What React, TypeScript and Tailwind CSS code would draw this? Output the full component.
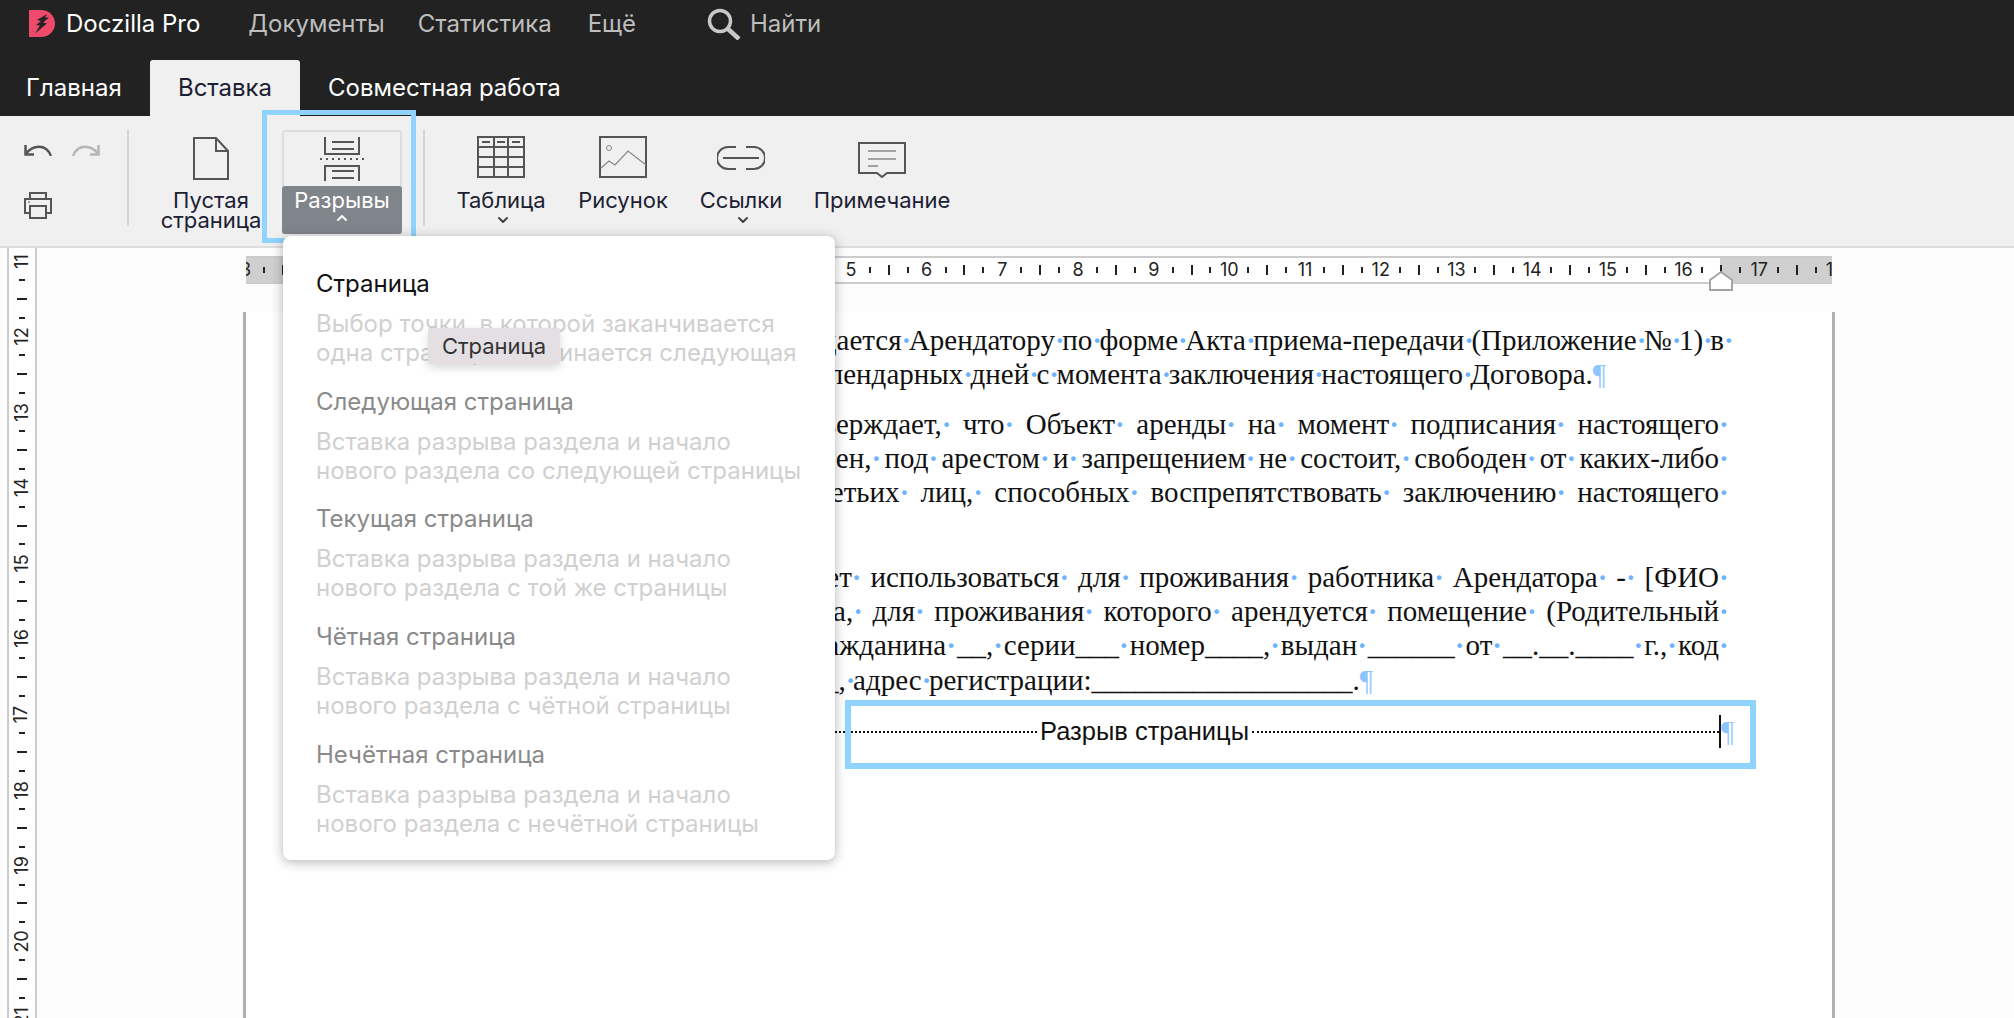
import { ChevronDown, ChevronUp } from "lucide-react";

const sans = "font-['Inter',sans-serif]";

function Logo() {
  return (
    <svg width="26" height="27" viewBox="0 0 26 27" className="shrink-0">
      <path d="M0 0h12c8 0 14 6 14 13.500s-6 13.500-14 13.500H0z" fill="#ee4a6c" />
      <path d="M18 4L8 10l4 1-5 4 4 .5-5 8 12-10-4-1 6-5-4 0z" fill="#222" />
    </svg>
  );
}

function SearchIcon() {
  return (
    <svg width="35" height="32" viewBox="0 0 35 32" fill="none" stroke="#c8c8c8" className="shrink-0">
      <circle cx="13" cy="13" r="10.500" strokeWidth="3.500" />
      <path d="M21 21l11 10" strokeWidth="4.500" />
    </svg>
  );
}

function TableIcon() {
  return (
    <svg width="48" height="42" viewBox="0 0 48 42" fill="none" stroke="#555" strokeWidth="2">
      <rect x="1" y="1" width="46" height="40" />
      <path d="M1 11h46M1 21h46M1 31h46M17 1v40M31 1v40" />
      <path d="M5 6h8M20 6h8M35 6h8" strokeWidth="2" />
    </svg>
  );
}

function PictureIcon() {
  return (
    <svg width="48" height="42" viewBox="0 0 48 42" fill="none" stroke="#555">
      <rect x="1" y="1" width="46" height="40" strokeWidth="2" />
      <circle cx="10" cy="12" r="2.500" stroke="#888" strokeWidth="1" />
      <path d="M2 32l8-7 6 4 13-14 18 14" stroke="#888" strokeWidth="1.200" />
    </svg>
  );
}

function LinkIcon() {
  return (
    <svg width="48" height="24" viewBox="0 0 48 24" fill="none" stroke="#555" strokeWidth="2">
      <path d="M19 1H11a10.500 10.500 0 0 0 0 22h8M29 1h8a10.500 10.500 0 0 1 0 22h-8M6 12h36" />
    </svg>
  );
}

function NoteIcon() {
  return (
    <svg width="48" height="36" viewBox="0 0 48 36" fill="none" stroke="#555">
      <path d="M1 1h46v30H29l-5 4-5-4H1z" strokeWidth="2" />
      <path d="M10 9h28M10 17h28M10 24h10" strokeWidth="1" />
    </svg>
  );
}

function BreaksIcon() {
  return (
    <svg width="44" height="44" viewBox="0 0 44 44" fill="none" stroke="#555" strokeWidth="2">
      <path d="M5 0v17h34V0M12 5h22M12 12h22" />
      <path d="M0 22h44" strokeDasharray="2 4" />
      <path d="M5 44V29h34v15M12 34h22M12 41h22" />
    </svg>
  );
}

function PageIcon() {
  return (
    <svg width="36" height="44" viewBox="0 0 36 44" fill="none" stroke="#555" strokeWidth="2">
      <path d="M1 1h22l12 13v28H1zM23 1v13h12" />
    </svg>
  );
}

function UndoIcon(props: { color: string; flip?: boolean }) {
  return (
    <svg width="28" height="11" viewBox="0 0 28 11" fill="none" stroke={props.color} strokeWidth="2.500" className={props.flip ? "-scale-x-100" : ""}>
      <path d="M1.500 0v9.500H10M2 9c6-9 20-11 25 2" />
    </svg>
  );
}

function PrintIcon() {
  return (
    <svg width="28" height="27" viewBox="0 0 28 27" fill="none" stroke="#555" strokeWidth="2">
      <path d="M6 6V1h16v5M6 21H1V7h26v14h-5" />
      <rect x="6" y="14" width="16" height="12" />
      <path d="M4 10h2" strokeWidth="1.500" stroke="#888" />
    </svg>
  );
}

function ToolButton(props: { icon: React.ReactNode; label: string; width: string; chevron?: boolean; iconClass?: string }) {
  return (
    <div className={`${props.width} flex flex-col items-center shrink-0`}>
      <div className="h-[53px] mt-[20px] flex items-center justify-center pb-[11px]">
        <div className={props.iconClass ?? ""}>{props.icon}</div>
      </div>
      <p className="text-[22px] leading-[22px] text-[#1c2033]">{props.label}</p>
      {props.chevron && <ChevronDown size={16} strokeWidth={3} className="text-[#444] mt-[1px] ml-[3px]" />}
    </div>
  );
}

function Toolbar() {
  return (
    <div className="h-[132px] bg-[#f0f0f0] border-b-2 border-[#dddddd] flex items-start shrink-0">
      <div className="ml-[24px] w-[76px] flex flex-col shrink-0">
        <div className="flex gap-[20px] mt-[29px]">
          <UndoIcon color="#555" />
          <UndoIcon color="#b5b5b5" flip />
        </div>
        <div className="mt-[36px]">
          <PrintIcon />
        </div>
      </div>
      <div className="w-[2px] h-[96px] bg-[#d4d4d4] mt-[14px] ml-[27px] shrink-0" />
      <div className="ml-[30px] w-[104px] flex flex-col items-center shrink-0">
        <div className="h-[53px] mt-[21px]">
          <PageIcon />
        </div>
        <p className="text-[22px] leading-[20px] text-[#1c2033] text-center">
          Пустая
          <br />
          страница
        </p>
      </div>
      <div className="relative ml-[19px] mt-[14px] w-[120px] h-[104px] rounded-[3px] border-2 border-[#dddddd] shrink-0">
        <div className="flex justify-center mt-[5px] h-[49px]">
          <BreaksIcon />
        </div>
        <div className="absolute inset-x-[-2px] bottom-[-2px] h-[48px] bg-[#80858b] rounded-[3px] flex flex-col items-center text-white">
          <p className="text-[22px] leading-[22px] mt-[3px]">Разрывы</p>
          <ChevronUp size={16} strokeWidth={3} className="-mt-[1px]" />
        </div>
        <div className="absolute left-[-22px] right-[-16px] top-[-22px] bottom-[-11px] border-[5px] border-[#8fd3fe]" />
      </div>
      <div className="w-[2px] h-[96px] bg-[#d4d4d4] mt-[14px] ml-[21px] shrink-0" />
      <div className="ml-[26px]">
        <ToolButton icon={<TableIcon />} label="Таблица" width="w-[100px]" chevron />
      </div>
      <div className="ml-[22px]">
        <ToolButton icon={<PictureIcon />} label="Рисунок" width="w-[100px]" />
      </div>
      <div className="ml-[18px]">
        <ToolButton icon={<LinkIcon />} label="Ссылки" width="w-[100px]" chevron iconClass="mt-[2px]" />
      </div>
      <div className="ml-[16px]">
        <ToolButton icon={<NoteIcon />} label="Примечание" width="w-[150px]" iconClass="mt-[6px]" />
      </div>
    </div>
  );
}

// numbers of the top ruler: left margin counts down, then the page counts up
const topNumbers = ["3", "2", "1", "", "1", "2", "3", "4", "5", "6", "7", "8", "9", "10", "11", "12", "13", "14", "15", "16", "17", "18"];
const sideNumbers = ["11", "12", "13", "14", "15", "16", "17", "18", "19", "20", "21"];

function TopRuler() {
  return (
    <div className="h-[28px] w-[1586px] overflow-hidden border-y-2 border-[#cccccc] bg-[linear-gradient(to_right,#cfcfcf_225px,#ffffff_225px,#ffffff_1474px,#cfcfcf_1474px)]">
      <div className="flex h-full -ml-[10px] items-center">
        {topNumbers.map((num, i) => (
          <div key={i} className="flex w-[75.7px] shrink-0 items-center">
            <div className="w-[18.925px] flex justify-center text-[18px] leading-none text-[#222] whitespace-nowrap">
              {num === "" ? <div className="w-[2px] h-[10px] bg-[#222]" /> : num}
            </div>
            <div className="w-[18.925px] flex justify-center">
              <div className="w-[2px] h-[6px] bg-[#222]" />
            </div>
            <div className="w-[18.925px] flex justify-center">
              <div className="w-[2px] h-[10px] bg-[#222]" />
            </div>
            <div className="w-[18.925px] flex justify-center">
              <div className="w-[2px] h-[6px] bg-[#222]" />
            </div>
          </div>
        ))}
      </div>
    </div>
  );
}

function SideRuler() {
  return (
    <div className="w-[30px] h-full overflow-hidden border-x-2 border-[#cccccc] bg-white shrink-0">
      <div className="flex flex-col mt-[3.500px] items-center">
        {sideNumbers.map((num) => (
          <div key={num} className="flex flex-col h-[75.6px] shrink-0 items-center">
            <div className="h-[18.9px] flex items-center justify-center text-[18px] leading-none text-[#222] -rotate-90 whitespace-nowrap">
              {num}
            </div>
            <div className="h-[18.9px] flex items-center">
              <div className="h-[2px] w-[6px] bg-[#222]" />
            </div>
            <div className="h-[18.9px] flex items-center">
              <div className="h-[2px] w-[10px] bg-[#222]" />
            </div>
            <div className="h-[18.9px] flex items-center">
              <div className="h-[2px] w-[6px] bg-[#222]" />
            </div>
          </div>
        ))}
      </div>
    </div>
  );
}

// one justified line, with the blue space marks of the editor
function Line(props: { text: string; last?: boolean; pr?: string }) {
  const words = props.text.split(" ");
  return (
    <div className={`h-[34.3px] leading-[34.3px] whitespace-nowrap ${props.pr ?? ""} ${props.last ? "text-right" : "[text-align-last:justify]"}`}>
      {words.map((word, i) => (
        <span key={i}>
          {word}
          {i < words.length - 1 || !props.last ? <span className="inline-block w-0 text-[#6cb4ff] font-bold">·</span> : null}
          {i < words.length - 1 ? " " : ""}
        </span>
      ))}
      {props.last && <span className="text-[#8ec5ff]">¶</span>}
    </div>
  );
}

function Page() {
  return (
    <div className="flex-1 bg-white border-x-[3px] border-[#b0b0b0] w-[1592px] -ml-[3px] pl-[225px] pr-[113px] pt-[11px] font-['Liberation_Serif',serif] text-[29px] text-[#111]">
      <Line text="Пп. 1.1. Объект аренды передается Арендатору по форме Акта приема-передачи (Приложение № 1) в" />
      <Line text="течение 3 (трёх) календарных дней с момента заключения настоящего Договора." last pr="pr-[113px]" />
      <div className="mt-[15px]">
        <Line text="4.2.10. Арендодатель подтверждает, что Объект аренды на момент подписания настоящего" />
        <Line text="такого Договора не обременен, под арестом и запрещением не состоит, свободен от каких-либо" />
        <Line text="не имеется притязаний третьих лиц, способных воспрепятствовать заключению настоящего" />
        <Line text="Договора." last pr="pr-[900px]" />
      </div>
      <div className="mt-[16px]">
        <Line text="4. Данное Помещение будет использоваться для проживания работника Арендатора - [ФИО" />
        <Line text="этого работника Арендатора, для проживания которого арендуется помещение (Родительный" />
        <Line text="падеж)], паспорт, данные гражданина __, серии___ номер____, выдан ______ от __.__.____ г., код" />
        <Line text="подразделения ___, адрес регистрации:__________________." last pr="pr-[346px]" />
      </div>
      <div className="relative mt-[18px] -mr-[2px] h-[34px] flex items-center font-['Liberation_Sans',sans-serif] text-[25.5px]">
        <div className="flex-1 border-t-2 border-dotted border-[#111]" />
        <span className="px-[3px] leading-none">Разрыв страницы</span>
        <div className="w-[467px] border-t-2 border-dotted border-[#111]" />
        <div className="w-[2px] h-[33px] bg-[#111] shrink-0" />
        <span className="w-0 text-[#8ec5ff] font-['Liberation_Serif',serif] text-[29px]">¶</span>
        <div className="absolute left-[374px] w-[911px] top-[-15px] h-[69px] border-[6px] border-[#8fd3fe]" />
      </div>
    </div>
  );
}

const menuItems = [
  { title: "Страница", lines: ["Выбор точки, в которой заканчивается", "одна страница и начинается следующая"] },
  { title: "Следующая страница", lines: ["Вставка разрыва раздела и начало", "нового раздела со следующей страницы"] },
  { title: "Текущая страница", lines: ["Вставка разрыва раздела и начало", "нового раздела с той же страницы"] },
  { title: "Чётная страница", lines: ["Вставка разрыва раздела и начало", "нового раздела с чётной страницы"] },
  { title: "Нечётная страница", lines: ["Вставка разрыва раздела и начало", "нового раздела с нечётной страницы"] },
];

function BreaksMenu() {
  return (
    <div className="absolute left-[283px] top-[236px] w-[552px] h-[624px] bg-white rounded-[8px] shadow-[0_2px_12px_rgba(0,0,0,0.3)] pl-[33px] pt-[33px]">
      {menuItems.map((item, i) => (
        <div key={item.title} className="mb-[19.7px]">
          <p className={`text-[24px] leading-[29px] mb-[11px] ${i === 0 ? "text-[#111]" : "text-[#8a8a8a]"}`}>{item.title}</p>
          {item.lines.map((line) => (
            <p key={line} className="text-[24px] leading-[29px] text-[#d0d0d0] whitespace-nowrap">
              {line}
            </p>
          ))}
        </div>
      ))}
      <div className="absolute left-[145px] top-[92px] w-[132px] h-[36px] bg-[#e3dfe3] rounded-[2px] shadow-[0_4px_10px_rgba(0,0,0,0.15)] flex items-center justify-center text-[22px] text-[#333]">
        Страница
      </div>
    </div>
  );
}

export default function App() {
  return (
    <div className={`relative w-[2014px] h-[1018px] overflow-hidden flex flex-col bg-[#fcfcfc] ${sans}`}>
      <div className="h-[116px] bg-[#222222] flex flex-col shrink-0">
        <div className="h-[47px] flex items-center text-[24px] pl-[29px]">
          <Logo />
          <span className="text-white ml-[11px]">Doczilla Pro</span>
          <span className="text-[#bdbdbd] ml-[48px]">Документы</span>
          <span className="text-[#bdbdbd] ml-[33px]">Статистика</span>
          <span className="text-[#bdbdbd] ml-[36px]">Ещё</span>
          <div className="ml-[71px]">
            <SearchIcon />
          </div>
          <span className="text-[#bdbdbd] ml-[8px]">Найти</span>
        </div>
        <div className="mt-[13px] h-[56px] flex text-[24px] text-white">
          <div className="w-[150px] pl-[26px] flex items-center">Главная</div>
          <div className="w-[150px] bg-[#f0f0f0] rounded-t-[3px] text-[#1c2033] flex items-center justify-center">Вставка</div>
          <div className="pl-[28px] flex items-center">Совместная работа</div>
        </div>
      </div>
      <Toolbar />
      <div className="flex-1 flex min-h-0 pl-[7px]">
        <SideRuler />
        <div className="flex flex-col ml-[209px] h-full">
          <div className="mt-[8px] mb-[28px]">
            <TopRuler />
          </div>
          <Page />
        </div>
      </div>
      {/* margin handle on the top ruler */}
      <svg width="24" height="20" viewBox="0 0 24 20" className="absolute left-[1709px] top-[271px]">
        <path d="M1 19V9l11-8 11 8v10z" fill="#fff" stroke="#a5a5a5" strokeWidth="2" />
      </svg>
      <BreaksMenu />
    </div>
  );
}
